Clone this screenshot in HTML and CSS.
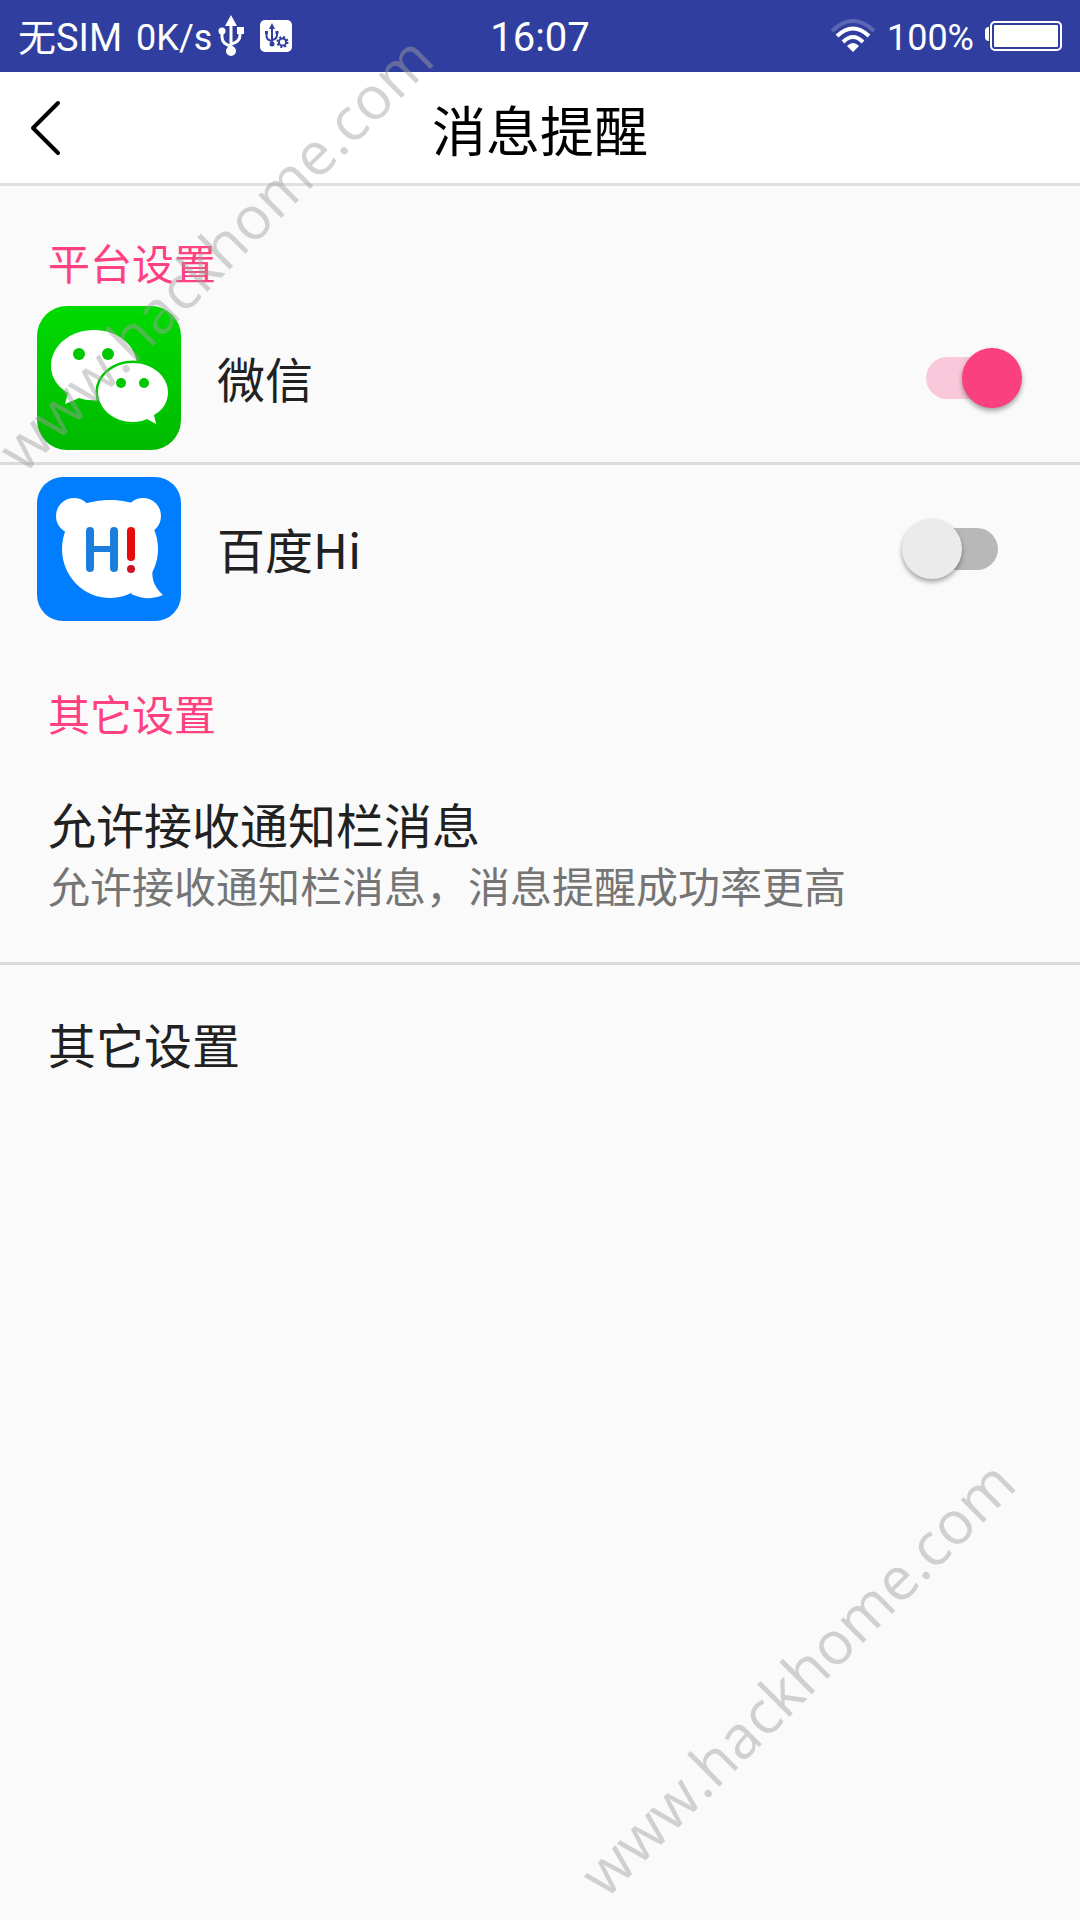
FILE: index.html
```html
<!DOCTYPE html>
<html lang="zh-CN">
<head>
  <meta charset="utf-8">
  <meta name="viewport" content="width=device-width, initial-scale=1">
  <title>消息提醒</title>
  <link rel="stylesheet" href="styles.css">
</head>
<body>
  <div class="screen">
    <div class="status-bar">
      <div class="status-left">
        <span class="carrier">无SIM</span>
        <span class="status-small">0K/s</span>
        <svg class="usb-icon" width="26" height="42" viewBox="0 0 26 42" aria-hidden="true">
          <path d="M13 8V36M4 16V22Q4 29 13 31M22 16V20Q22 27 13 29" fill="none" stroke="#fff" stroke-width="3"/>
          <path d="M13 0L19 11H7Z" fill="#fff"/>
          <circle cx="4" cy="16" r="3.5" fill="#fff"/>
          <rect x="19" y="12" width="7" height="7" fill="#fff"/>
          <circle cx="13" cy="36" r="5" fill="#fff"/>
        </svg>
        <svg width="32" height="32" viewBox="0 0 32 32" aria-hidden="true">
          <rect width="32" height="32" rx="5" fill="#fff"/>
          <g fill="none" stroke="#303f9f" stroke-width="2">
            <path d="M12 6V24M6.500 12V16Q6.500 20 12 21M17 12V15Q17 19 12 20"/>
            <circle cx="22.500" cy="22" r="3.600"/>
            <circle cx="22.500" cy="22" r="5" stroke-dasharray="2 1.930"/>
          </g>
          <path d="M12 3L15 9H9ZM5 11H8V14H5ZM15.500 11H18.500V14H15.500Z" fill="#303f9f"/>
          <circle cx="12" cy="24" r="2.500" fill="#303f9f"/>
        </svg>
      </div>
      <time class="clock">16:07</time>
      <div class="status-right">
        <svg width="46" height="34" viewBox="0 0 46 34" aria-hidden="true">
          <path d="M2 12Q23 -8 44 12" fill="none" stroke="#5a67b5" stroke-width="4"/>
          <path d="M7 17Q23 2 39 17" fill="none" stroke="#fff" stroke-width="4"/>
          <path d="M13 23Q23 13 33 23" fill="none" stroke="#fff" stroke-width="4"/>
          <path d="M17 27Q23 21 29 27L23 33Z" fill="#fff"/>
        </svg>
        <span class="status-small">100%</span>
        <svg width="77" height="30" viewBox="0 0 77 30" aria-hidden="true">
          <path d="M4 6Q0 6 0 10V16Q0 20 4 20Z" fill="#fff"/>
          <rect x="6" y="1" width="70" height="28" rx="4" fill="none" stroke="#fff" stroke-width="2"/>
          <rect x="9" y="4" width="64" height="22" rx="1" fill="#fff"/>
        </svg>
      </div>
    </div>

    <header class="app-bar">
      <button class="back" type="button" aria-label="返回">
        <svg width="32" height="56" viewBox="0 0 32 56" aria-hidden="true">
          <path d="M29 3L4 28L29 53" fill="none" stroke="#000" stroke-width="4" stroke-linecap="round" stroke-linejoin="round"/>
        </svg>
      </button>
      <h1 class="title">消息提醒</h1>
    </header>

    <main>
      <section class="group">
        <h2 class="group-title">平台设置</h2>
        <label class="platform">
          <svg class="app-icon" viewBox="0 0 144 144" aria-hidden="true">
            <defs>
              <linearGradient id="green" x1="0" y1="0" x2="0" y2="1">
                <stop offset="0" stop-color="#00da00"/>
                <stop offset="1" stop-color="#00b900"/>
              </linearGradient>
            </defs>
            <rect width="144" height="144" rx="30" fill="url(#green)"/>
            <path d="M57 24C33 24 14 40 14 60C14 72 21 81 31 87L28 98L42 92Q50 95 60 94C85 94 100 78 100 60C100 40 81 24 57 24Z" fill="#fff"/>
            <path d="M96 57C77 57 61 70 61 86C61 103 77 116 96 116Q104 116 110 113L119 118L117 109C126 104 131 96 131 86C131 70 115 57 96 57Z" fill="#fff" stroke="#00c800" stroke-width="5" paint-order="stroke"/>
            <g fill="#00c800">
              <circle cx="42" cy="48" r="6"/>
              <circle cx="71" cy="48" r="6"/>
              <circle cx="84" cy="77" r="5"/>
              <circle cx="107" cy="77" r="5"/>
            </g>
          </svg>
          <span class="platform-name">微信</span>
          <input class="switch" type="checkbox" checked>
        </label>
        <label class="platform">
          <svg class="app-icon" viewBox="0 0 144 144" aria-hidden="true">
            <rect width="144" height="144" rx="26" fill="#017eff"/>
            <g fill="#fff">
              <circle cx="37" cy="39" r="18"/>
              <circle cx="106" cy="39" r="18"/>
              <ellipse cx="73" cy="72" rx="48" ry="49"/>
              <path d="M50 26Q73 20 96 26V50H50Z"/>
              <path d="M117 86Q111 105 126 118Q112 125 94 117Z"/>
            </g>
            <path d="M53 54V91M77 54V91" stroke="#1a7fdc" stroke-width="8" stroke-linecap="round"/>
            <path d="M53 72H77" stroke="#1a7fdc" stroke-width="6"/>
            <path d="M94 54V80" stroke="#e60a0a" stroke-width="8" stroke-linecap="round"/>
            <circle cx="94" cy="92" r="4" fill="#cc1422"/>
          </svg>
          <span class="platform-name">百度Hi</span>
          <input class="switch" type="checkbox">
        </label>
      </section>

      <section class="group group-other">
        <h2 class="group-title">其它设置</h2>
        <a class="setting" href="#notifications">
          <span class="setting-name">允许接收通知栏消息</span>
          <span class="setting-note">允许接收通知栏消息，消息提醒成功率更高</span>
        </a>
        <a class="setting" href="#other">
          <span class="setting-name">其它设置</span>
        </a>
      </section>
    </main>

    <div class="watermark watermark-top" aria-hidden="true">www.hackhome.com</div>
    <div class="watermark watermark-bottom" aria-hidden="true">www.hackhome.com</div>
  </div>
</body>
</html>
```
FILE: styles.css
```css
* {
  box-sizing: border-box;
}

body {
  margin: 0;
  background: #fafafa;
  color: #212121;
  font-family: "Noto Sans CJK SC", sans-serif;
}

.screen {
  position: relative;
  min-height: 100vh;
  overflow: hidden;
}

/* Status bar */
.status-bar {
  display: grid;
  grid-template-columns: 1fr auto 1fr;
  align-items: center;
  height: 72px;
  padding: 0 18px;
  background: #303f9f;
  color: #fff;
  font-family: Roboto, "Noto Sans CJK SC", sans-serif;
}

.status-left,
.status-right {
  display: flex;
  align-items: center;
}

.status-left {
  gap: 14px;
}

.status-right {
  justify-content: flex-end;
  gap: 11px;
}

.carrier,
.clock,
.status-small {
  padding-top: 4px;
  line-height: 68px;
}

.carrier {
  font-size: 38px;
}

.clock {
  font-size: 40px;
}

.status-small {
  font-size: 36px;
}

.usb-icon {
  margin: 0 2px 0 -8px;
}

/* App bar */
.app-bar {
  display: grid;
  grid-template-columns: 1fr auto 1fr;
  align-items: center;
  height: 114px;
  border-bottom: 3px solid #dfe0df;
  background: #fff;
}

.back {
  display: flex;
  justify-self: start;
  padding: 24px 29px;
  border: 0;
  background: none;
}

.title {
  margin: 0;
  padding-top: 2px;
  color: #000;
  font-size: 54px;
  font-weight: 400;
  line-height: 80px;
}

/* Groups */
.group-title {
  margin: 0;
  padding: 52px 48px 8px;
  color: #ff4081;
  font-size: 42px;
  font-weight: 400;
  line-height: 48px;
}

.group-other {
  margin-top: 4px;
}

.platform {
  display: flex;
  align-items: center;
  gap: 36px;
  padding: 12px 58px 12px 37px;
}

.platform + .platform,
.setting + .setting {
  border-top: 3px solid #dbdbdb;
}

.app-icon {
  flex: none;
  width: 144px;
  height: 144px;
}

.platform-name {
  flex: 1;
  padding-bottom: 2px;
  font-size: 48px;
  line-height: 72px;
}

/* Switch */
.switch {
  position: relative;
  flex: none;
  width: 120px;
  height: 60px;
  margin: 0;
  appearance: none;
}

.switch::before,
.switch::after {
  position: absolute;
  content: "";
}

.switch::before {
  inset: 9px 24px;
  border-radius: 21px;
  background: #b8b8b8;
}

.switch::after {
  top: 0;
  left: 0;
  width: 60px;
  height: 60px;
  border-radius: 50%;
  background: #ebebeb;
  box-shadow: 0 3px 5px rgba(0, 0, 0, 0.35);
}

.switch:checked::before {
  background: #f9c8da;
}

.switch:checked::after {
  left: 60px;
  background: #fb407f;
}

/* Settings */
.setting {
  display: flex;
  flex-direction: column;
  padding: 47px 48px 46px;
  color: inherit;
  text-decoration: none;
}

.setting-name {
  font-size: 48px;
  line-height: 62px;
}

.setting-note {
  color: #757575;
  font-size: 42px;
  line-height: 62px;
}

/* Watermark laid over the page */
.watermark {
  position: absolute;
  color: rgba(160, 160, 160, 0.46);
  font-family: "Open Sans", sans-serif;
  font-size: 60px;
  font-weight: 600;
  line-height: 60px;
  white-space: nowrap;
  pointer-events: none;
  transform: rotate(-45deg);
}

.watermark {
  font-weight: 500;
}

.watermark-top {
  top: 420px;
  left: 29px;
  transform-origin: left bottom;
}

.watermark-bottom {
  right: 56px;
  bottom: 428px;
  transform-origin: right bottom;
}
```
